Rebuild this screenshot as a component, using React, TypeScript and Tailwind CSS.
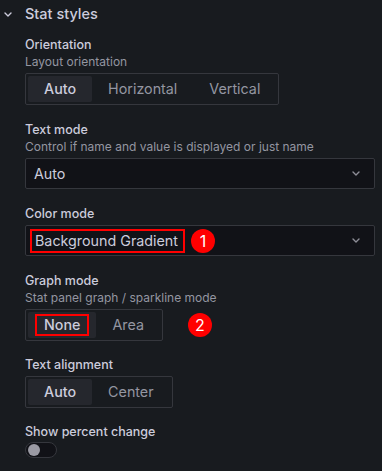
import React from "react";

const font = { fontFamily: "Inter, 'Noto Sans', sans-serif" };

function Chevron({ className = "" }: { className?: string }) {
  return (
    <svg width="8" height="5" viewBox="0 0 8 5" className={className} fill="none">
      <path d="M1 1l3 3 3-3" stroke="currentColor" strokeWidth="1.4" strokeLinecap="round" strokeLinejoin="round" />
    </svg>
  );
}

function Badge({ n, className = "" }: { n: number; className?: string }) {
  return (
    <span className={`flex h-[24px] w-[24px] shrink-0 items-center justify-center rounded-full bg-[#ff0000] text-[16px] leading-none text-white ${className}`}>
      {n}
    </span>
  );
}

function Field({ label, desc, children, mb = "mb-[17px]", gap = "mt-[3px]" }: { label: string; desc?: string; children: React.ReactNode; mb?: string; gap?: string }) {
  return (
    <div className={mb}>
      <div className="text-[12.5px] font-medium leading-4 text-[#ccccdc]">{label}</div>
      {desc && <div className="mt-[1px] text-[12px] leading-4 text-[#9496a1]">{desc}</div>}
      <div className={gap}>{children}</div>
    </div>
  );
}

type Opt = { label: string; active?: boolean; marked?: boolean };

function Radio({ options }: { options: Opt[] }) {
  return (
    <div className="inline-flex h-[32px] rounded-[2px] border border-[#35373d] p-[2px]">
      {options.map((o) =>
        o.marked ? (
          <div key={o.label} className="flex items-center rounded-[2px] bg-[#25272d] px-[7px] text-[14.3px] font-medium text-[#ccccdc]">
            <span className="border-2 border-[#ff0000] px-[7px] leading-[18px]">{o.label}</span>
          </div>
        ) : (
          <div
            key={o.label}
            className={`flex items-center rounded-[2px] px-4 text-[14.3px] ${o.active ? "bg-[#25272d] font-medium text-[#ccccdc]" : "text-[#9496a1]"}`}
          >
            {o.label}
          </div>
        )
      )}
    </div>
  );
}

function Select({ children, pl = "pl-2" }: { children: React.ReactNode; pl?: string }) {
  return (
    <div className={`flex h-[31px] w-[350px] items-center rounded-[2px] border border-[#35373d] bg-[#111217] ${pl} pr-[14px] text-[14.3px] text-[#ccccdc]`}>
      <div className="flex flex-1 items-center">{children}</div>
      <Chevron className="text-[#8e8e97]" />
    </div>
  );
}

export default function App() {
  return (
    <div className="h-[471px] w-[382px] bg-[#181b1f]" style={font}>
      <div className="flex h-[28px] items-center">
        <Chevron className="ml-[4px] text-[#ccccdc]" />
        <span className="ml-[13px] text-[14.5px] font-medium text-[#ccccdc]">Stat styles</span>
      </div>
      <div className="pl-[25px] pt-[9px]">
        <Field label="Orientation" desc="Layout orientation">
          <Radio options={[{ label: "Auto", active: true }, { label: "Horizontal" }, { label: "Vertical" }]} />
        </Field>
        <Field label="Text mode" desc="Control if name and value is displayed or just name">
          <Select>Auto</Select>
        </Field>
        <Field label="Color mode">
          <Select pl="pl-[4px]">
            <span className="border-2 border-[#ff0000] pl-[3px] pr-[5px] leading-[20px]">Background Gradient</span>
            <Badge n={1} className="ml-[6px]" />
          </Select>
        </Field>
        <Field label="Graph mode" desc="Stat panel graph / sparkline mode" mb="mb-[16px]">
          <div className="flex items-center">
            <Radio options={[{ label: "None", active: true, marked: true }, { label: "Area" }]} />
            <Badge n={2} className="ml-[25px]" />
          </div>
        </Field>
        <Field label="Text alignment" mb="mb-[16px]">
          <Radio options={[{ label: "Auto", active: true }, { label: "Center" }]} />
        </Field>
        <Field label="Show percent change" gap="mt-[2px]">
          <div className="flex h-[16px] w-[32px] items-center rounded-full border border-[#35373d] bg-[#111217] pl-[2px]">
            <span className="h-[12px] w-[12px] rounded-full bg-[#9a9aa3]" />
          </div>
        </Field>
      </div>
    </div>
  );
}
